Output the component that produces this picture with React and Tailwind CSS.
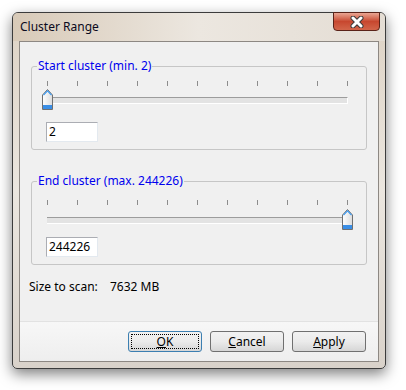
import React from 'react';

const font = { fontFamily: '"Noto Sans", "DejaVu Sans", sans-serif' };

const Thumb = () => (
  <svg width="11" height="21" viewBox="0 0 11 21">
    <defs>
      <linearGradient id="tg" x1="0" y1="0" x2="1" y2="0">
        <stop offset="0" stopColor="#ffffff" />
        <stop offset="1" stopColor="#dcdcdc" />
      </linearGradient>
    </defs>
    <path d="M0.5 6 L5.5 0.5 L10.5 6 L10.5 20.5 L0.5 20.5 Z" fill="url(#tg)" stroke="#707070" />
    <path d="M1.5 6.2 L5.5 1.8 L9.5 6.2" fill="none" stroke="#3b98ef" strokeWidth="1.2" />
    <rect x="1" y="16" width="9" height="4" fill="#3a8ee6" />
  </svg>
);

const Slider = ({ atEnd, tickGap, thumbGap }) => (
  <div className={`ml-[10px] w-[311px] ${tickGap}`}>
    <div className="flex justify-between px-[5px]">
      {Array.from({ length: 11 }).map((_, i) => (
        <div key={i} className="w-px h-[5px] bg-[#8c8c8c]" />
      ))}
    </div>
    <div className={`relative h-[21px] ${thumbGap}`}>
      <div className="absolute top-[8px] left-[5px] w-[301px] h-[7px] border-t border-[#9c9c9c] border-b border-b-white border-r border-r-white bg-[#e3e3e3]" />
      <div className={`absolute top-0 ${atEnd ? 'right-0' : 'left-0'}`}>
        <Thumb />
      </div>
    </div>
  </div>
);

const TextBox = ({ value, gap }) => (
  <div
    className={`ml-[14px] ${gap} w-[52px] h-[20px] bg-white border border-[#e3e9ef] border-t-[#abadb3] border-l-[#abadb3] flex items-center pl-[2px] text-[12px] text-black`}
  >
    {value}
  </div>
);

const Group = ({ label, children, className }) => (
  <fieldset className={`mx-[11px] border border-[#c6c6c6] rounded-[3px] pb-[7px] ${className}`}>
    <legend className="ml-[5px] px-[1px] text-[12px] leading-[16px] text-[#0000ee]">{label}</legend>
    {children}
  </fieldset>
);

const Btn = ({ first, rest, def }) => (
  <button
    className={`h-[21px] w-[74px] rounded-[3px] border ${
      def ? 'border-[#3c7fb1]' : 'border-[#707070]'
    } bg-gradient-to-b from-[#f2f2f2] via-[#ebebeb] to-[#d6d6d6] p-[2px] text-[12px] text-black`}
  >
    <div
      className={`h-full w-full flex items-center justify-center ${
        def ? 'border border-dotted border-black' : ''
      }`}
    >
      <span>
        <span className="underline">{first}</span>
        {rest}
      </span>
    </div>
  </button>
);

export default function App() {
  return (
    <div className="w-[406px] h-[390px] bg-white pt-[12px] pl-[12px]" style={font}>
      <div className="w-[374px] h-[357px] flex flex-col rounded-t-[6px] rounded-b-[5px] border border-[#3c3c3c] bg-gradient-to-b from-[#ddd2c4] via-[#ebe6df] to-[#d9d2ca] shadow-[0_5px_14px_rgba(0,0,0,0.5)]">
        <div className="h-[28px] flex items-start bg-gradient-to-r from-[#d8cab8] via-[#ece7e0] to-[#e4ddd4] rounded-t-[5px]">
          <div className="pl-[7px] h-full flex items-center text-[12px] text-[#0a0a20]">Cluster Range</div>
          <div className="ml-auto mr-[5px] -mt-px w-[47px] h-[19px] rounded-b-[4px] border border-[#5a2218] bg-gradient-to-b from-[#e9a593] via-[#c7472f] to-[#d2654a] flex items-center justify-center">
            <svg width="16" height="12" viewBox="0 0 16 12">
              <path d="M4 2 L12 10 M12 2 L4 10" stroke="#3b3b3b" strokeWidth="5" strokeLinecap="round" />
              <path d="M4 2 L12 10 M12 2 L4 10" stroke="#ffffff" strokeWidth="3" strokeLinecap="round" />
            </svg>
          </div>
        </div>
        <div className="mx-[6px] h-[321px] flex flex-col bg-[#f0f0f0] border border-[#8d8883]">
          <Group label="Start cluster (min. 2)" className="mt-[16px]">
            <Slider atEnd={false} tickGap="mt-[7px]" thumbGap="mt-[3px]" />
            <TextBox value="2" gap="mt-[12px]" />
          </Group>
          <Group label="End cluster (max. 244226)" className="mt-[23px]">
            <Slider atEnd tickGap="mt-[11px]" thumbGap="mt-[4px]" />
            <TextBox value="244226" gap="mt-[7px]" />
          </Group>
          <div className="mt-[14px] flex items-center h-[16px] text-[12px] text-black">
            <span className="ml-[9px] w-[81px]">Size to scan:</span>
            <span>7632 MB</span>
          </div>
          <div className="mt-auto h-[40px] border-t border-[#e2e2e2] bg-gradient-to-b from-[#f7f7f7] to-[#eeeeee] flex justify-end items-start pt-[9px] pr-[12px] gap-[8px]">
            <Btn first="O" rest="K" def />
            <Btn first="C" rest="ancel" />
            <Btn first="A" rest="pply" />
          </div>
        </div>
        <div className="h-[5px]" />
      </div>
    </div>
  );
}
